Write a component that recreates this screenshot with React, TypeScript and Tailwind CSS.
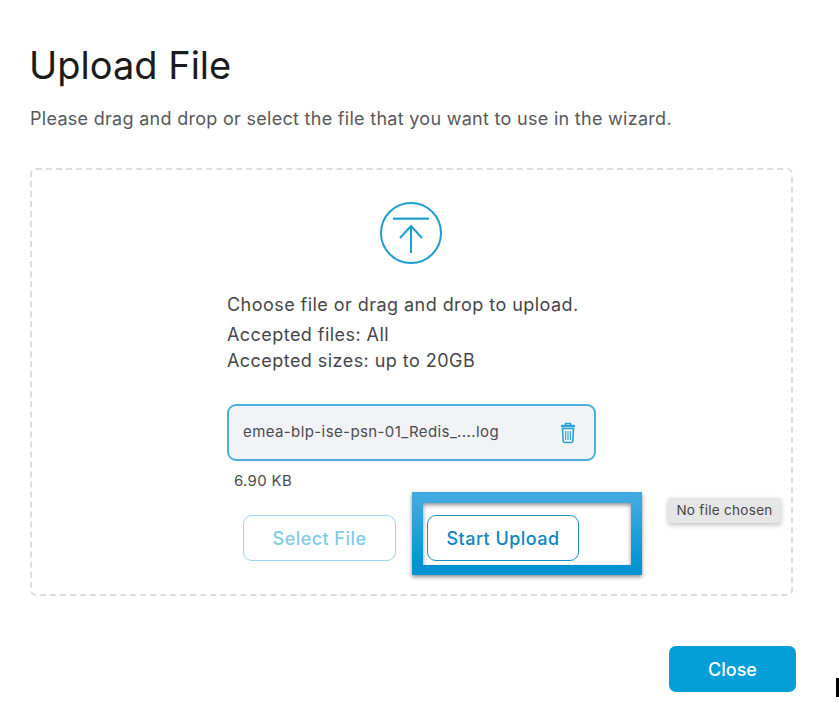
import React from 'react';

const UploadIcon = () => (
  <svg width="64" height="64" viewBox="0 0 64 64" fill="none" stroke="#1f9dd1" strokeWidth="2">
    <circle cx="32" cy="32" r="30" />
    <path d="M14 17.7H50" strokeWidth="2.2" />
    <path d="M32 52V25M21 37L32 25L43 37" />
  </svg>
);

const TrashIcon = () => (
  <svg width="16" height="22" viewBox="0 0 16 22" fill="none" stroke="#2c9fd4" strokeWidth="1.6">
    <path d="M5.5 3V1.5H10.5V3" />
    <path d="M1 4H15" strokeWidth="2.4" />
    <path d="M2.5 6.5L3.2 19C3.3 20 3.8 20.5 4.6 20.5H11.4C12.2 20.5 12.7 20 12.8 19L13.5 6.5Z" />
    <path d="M5.7 9V18M8 9V18M10.3 9V18" strokeWidth="1.1" />
  </svg>
);

export default function App() {
  return (
    <div className="relative w-[839px] h-[710px] overflow-hidden bg-white pl-[30px] pt-[41px] font-['Inter',sans-serif]">
      <h1 className="-ml-px text-[38px] leading-[48px] text-[#1b1b1d]">Upload File</h1>
      <p className="mt-[18px] text-[18px] leading-[24px] tracking-[0.29px] text-[#58585b]">
        Please drag and drop or select the file that you want to use in the wizard.
      </p>

      {/* Drop zone */}
      <div className="mt-[37px] w-[763px] h-[428px] rounded-[6px] border-2 border-dashed border-[#dcdcdc] pl-[195px] pt-[31px]">
        <div className="ml-[152px]">
          <UploadIcon />
        </div>
        <p className="mt-[28px] text-[18px] leading-[24px] tracking-[0.45px] text-[#46464a]">
          Choose file or drag and drop to upload.
        </p>
        <p className="mt-[5px] text-[18px] leading-[26px] tracking-[0.45px] text-[#46464a]">Accepted files: All</p>
        <p className="text-[18px] leading-[26px] tracking-[0.45px] text-[#46464a]">Accepted sizes: up to 20GB</p>

        <div className="mt-[30px] flex h-[57px] w-[369px] items-center justify-between rounded-[9px] border-2 border-[#4aafdc] bg-[#f1f3f6] pl-[14px] pr-[18px]">
          <span className="text-[15px] tracking-[0.4px] text-[#4c4c50]">emea-blp-ise-psn-01_Redis_....log</span>
          <TrashIcon />
        </div>
        <p className="mt-[9px] ml-[7px] text-[15px] leading-[22px] tracking-[0.3px] text-[#4c4c50]">6.90 KB</p>

        <div className="mt-[23px] ml-[16px] flex gap-[31px]">
          <button className="h-[46px] w-[153px] rounded-[9px] border border-[#9fd6ef] bg-white text-[18px] font-[450] tracking-[0.45px] text-[#7fcbe9]">
            Select File
          </button>
          <button className="h-[46px] w-[152px] rounded-[9px] border border-[#1a8fc4] bg-white text-[18px] font-[450] tracking-[0.45px] text-[#0f86bf]">
            Start Upload
          </button>
        </div>
      </div>

      <div className="mt-[50px] ml-[639px]">
        <button className="h-[46px] w-[127px] rounded-[7px] bg-[#049fd9] text-[18px] font-medium text-white">Close</button>
      </div>

      {/* Annotation box around Start Upload */}
      <div className="absolute left-[412px] top-[492px] h-[83px] w-[230px] border-x-[11px] border-t-[11px] border-b-[10px] [border-image:linear-gradient(#3fa9e0,#0095d0)_1] shadow-[0_2px_4px_rgba(0,0,0,0.45),inset_0_2px_4px_rgba(0,0,0,0.45)]" />

      {/* Native file input tooltip */}
      <div className="absolute left-[668px] top-[498px] flex h-[25px] w-[113px] items-center justify-center rounded-[2px] bg-[#e6e6e6] text-[13.5px] tracking-[0.3px] text-[#454545] shadow-[0_2px_5px_rgba(0,0,0,0.25)]">
        No file chosen
      </div>

      {/* Mouse cursor */}
      <div className="absolute left-[836px] top-[678px] h-[19px] w-[3px] bg-black" />
    </div>
  );
}
